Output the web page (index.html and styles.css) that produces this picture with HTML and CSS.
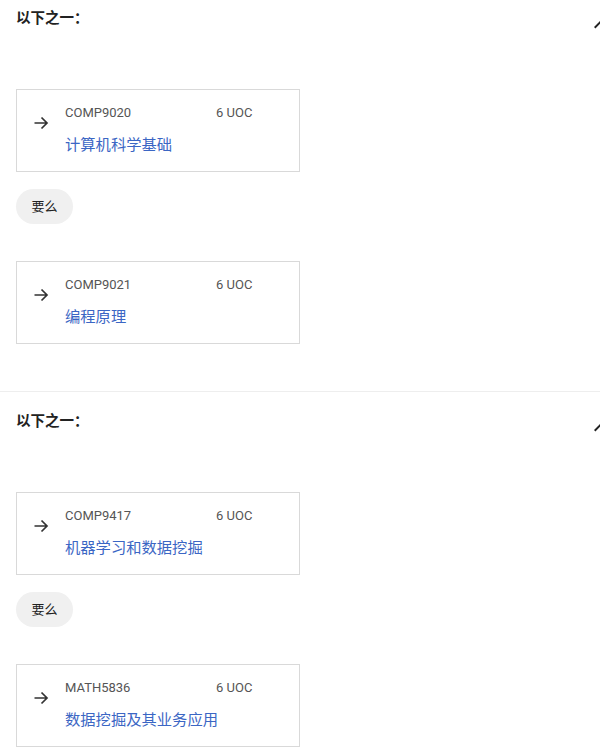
FILE: index.html
```html
<!DOCTYPE html>
<html lang="zh-CN">
<head>
<meta charset="utf-8">
<title>以下之一</title>
<link rel="stylesheet" href="styles.css">
</head>
<body>
<div class="list">
  <section class="section">
    <div class="section-head">
      <h3 class="title">以下之一：</h3>
      <svg class="chevron" viewBox="0 0 24 24" width="24" height="24"><path d="M12 8l-6 6 1.41 1.41L12 10.83l4.59 4.58L18 14z" fill="#222"/></svg>
    </div>
    <div class="body">
      <a class="card" href="#">
        <svg class="arrow" viewBox="0 0 16 16" width="16" height="16"><path d="M1.5 8h12.5M8.5 2.5L14 8l-5.5 5.5" fill="none" stroke="#333" stroke-width="1.7"/></svg>
        <div class="info">
          <div class="meta"><span class="code">COMP9020</span><span class="uoc">6 UOC</span></div>
          <div class="name">计算机科学基础</div>
        </div>
      </a>
      <div class="or">要么</div>
      <a class="card" href="#">
        <svg class="arrow" viewBox="0 0 16 16" width="16" height="16"><path d="M1.5 8h12.5M8.5 2.5L14 8l-5.5 5.5" fill="none" stroke="#333" stroke-width="1.7"/></svg>
        <div class="info">
          <div class="meta"><span class="code">COMP9021</span><span class="uoc">6 UOC</span></div>
          <div class="name">编程原理</div>
        </div>
      </a>
    </div>
  </section>
  <section class="section">
    <div class="section-head">
      <h3 class="title">以下之一：</h3>
      <svg class="chevron" viewBox="0 0 24 24" width="24" height="24"><path d="M12 8l-6 6 1.41 1.41L12 10.83l4.59 4.58L18 14z" fill="#222"/></svg>
    </div>
    <div class="body">
      <a class="card" href="#">
        <svg class="arrow" viewBox="0 0 16 16" width="16" height="16"><path d="M1.5 8h12.5M8.5 2.5L14 8l-5.5 5.5" fill="none" stroke="#333" stroke-width="1.7"/></svg>
        <div class="info">
          <div class="meta"><span class="code">COMP9417</span><span class="uoc">6 UOC</span></div>
          <div class="name">机器学习和数据挖掘</div>
        </div>
      </a>
      <div class="or">要么</div>
      <a class="card" href="#">
        <svg class="arrow" viewBox="0 0 16 16" width="16" height="16"><path d="M1.5 8h12.5M8.5 2.5L14 8l-5.5 5.5" fill="none" stroke="#333" stroke-width="1.7"/></svg>
        <div class="info">
          <div class="meta"><span class="code">MATH5836</span><span class="uoc">6 UOC</span></div>
          <div class="name">数据挖掘及其业务应用</div>
        </div>
      </a>
    </div>
  </section>
</div>
</body>
</html>
```

FILE: styles.css
```css
html, body {
  margin: 0;
  padding: 0;
  background: #fff;
  overflow: hidden;
}
body {
  font-family: Roboto, "Noto Sans CJK SC", sans-serif;
  color: #222;
}
.list {
  width: 600px;
  overflow: hidden;
}
.section {
  padding: 21px 0 47px;
  border-bottom: 1px solid #eeeeee;
}
.section:first-child {
  padding-top: 10px;
}
.section-head {
  display: flex;
  justify-content: space-between;
  align-items: flex-start;
  height: 18px;
  padding-left: 16px;
}
.title {
  margin: 0;
  font-size: 14.5px;
  line-height: 18px;
  font-weight: 700;
  color: #222;
}
.chevron {
  flex-shrink: 0;
  margin-top: 3px;
  margin-right: -12px;
}
.body {
  display: flex;
  flex-direction: column;
  align-items: flex-start;
  padding-left: 16px;
  margin-top: 61px;
}
.card {
  box-sizing: border-box;
  width: 284px;
  height: 83px;
  border: 1px solid #d9d9d9;
  display: flex;
  align-items: flex-start;
  gap: 16px;
  padding: 14px 16px 0 16px;
  text-decoration: none;
  background: #fff;
}
.arrow {
  flex-shrink: 0;
  margin-top: 11px;
}
.info {
  display: flex;
  flex-direction: column;
  gap: 13px;
}
.meta {
  display: grid;
  grid-template-columns: 151px auto;
  font-size: 13px;
  line-height: 18px;
  color: #555;
}
.name {
  font-size: 15.3px;
  line-height: 20px;
  color: #3b66c4;
}
.or {
  margin: 17px 0 37px;
  height: 35px;
  width: 57px;
  box-sizing: border-box;
  border-radius: 18px;
  background: #f0f0f0;
  font-size: 13px;
  line-height: 35px;
  text-align: center;
  color: #222;
}
```
